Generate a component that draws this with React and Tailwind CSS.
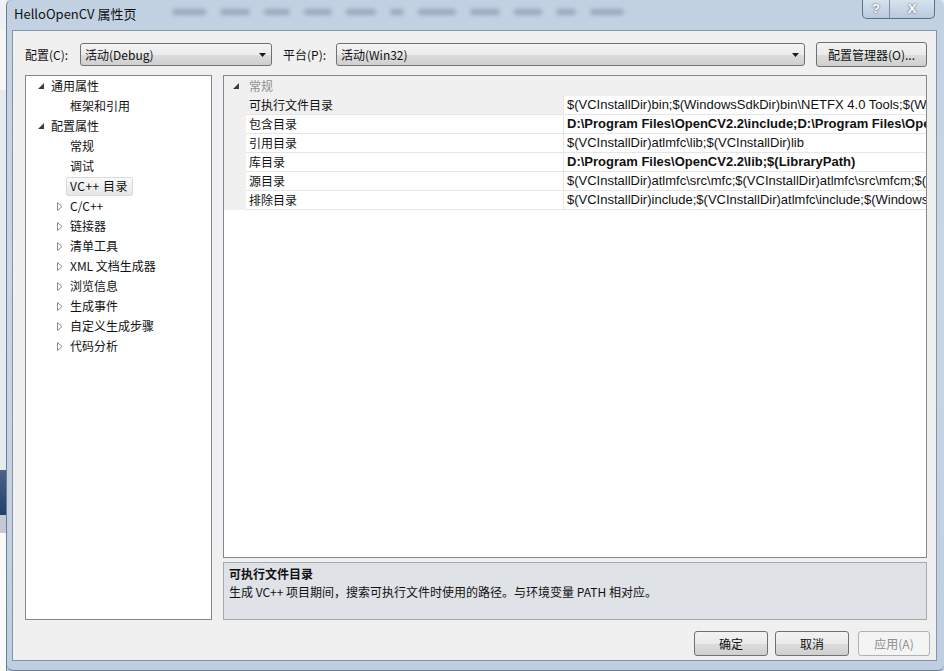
import React from "react";

const CJK = "font-['Noto_Sans_CJK_SC','Noto_Sans',sans-serif]";
const LAT = "font-['Liberation_Sans','Noto_Sans_CJK_SC',sans-serif]";

const tree = [
  { level: 1, label: "通用属性" },
  { level: 2, label: "框架和引用" },
  { level: 1, label: "配置属性" },
  { level: 2, label: "常规" },
  { level: 2, label: "调试" },
  { level: 2, label: "VC++ 目录", selected: true },
  { level: 2, label: "C/C++", arrow: true },
  { level: 2, label: "链接器", arrow: true },
  { level: 2, label: "清单工具", arrow: true },
  { level: 2, label: "XML 文档生成器", arrow: true },
  { level: 2, label: "浏览信息", arrow: true },
  { level: 2, label: "生成事件", arrow: true },
  { level: 2, label: "自定义生成步骤", arrow: true },
  { level: 2, label: "代码分析", arrow: true },
];

const props = [
  { name: "可执行文件目录", value: "$(VCInstallDir)bin;$(WindowsSdkDir)bin\\NETFX 4.0 Tools;$(WindowsSdkDir)bin;$(VSInstallDir)Common7\\Tools\\bin", selected: true },
  { name: "包含目录", value: "D:\\Program Files\\OpenCV2.2\\include;D:\\Program Files\\OpenCV2.2\\include\\opencv;$(IncludePath)", bold: true },
  { name: "引用目录", value: "$(VCInstallDir)atlmfc\\lib;$(VCInstallDir)lib" },
  { name: "库目录", value: "D:\\Program Files\\OpenCV2.2\\lib;$(LibraryPath)", bold: true },
  { name: "源目录", value: "$(VCInstallDir)atlmfc\\src\\mfc;$(VCInstallDir)atlmfc\\src\\mfcm;$(VCInstallDir)atlmfc\\src\\atl;$(VCInstallDir)crt\\src" },
  { name: "排除目录", value: "$(VCInstallDir)include;$(VCInstallDir)atlmfc\\include;$(WindowsSdkDir)include;$(FrameworkSDKDir)\\include" },
];

// blurred menu items of the window behind the glass title bar
const blobs = [34, 30, 26, 28, 30, 14, 38, 30, 28, 20, 34];

const Expanded = () => (
  <svg width="6" height="6" viewBox="0 0 6 6">
    <polygon points="6,0 6,6 0,6" fill="#3c3c3c" />
  </svg>
);

const Collapsed = () => (
  <svg width="6" height="9" viewBox="0 0 6 9">
    <polygon points="0.5,0.5 5,4.5 0.5,8.5" fill="none" stroke="#8a8a8a" strokeWidth="1" />
  </svg>
);

const DropArrow = () => (
  <svg width="7" height="4" viewBox="0 0 7 4">
    <polygon points="0,0 7,0 3.5,4" fill="#1a1a1a" />
  </svg>
);

const Combo = ({ text, width }) => (
  <div
    className={`${width} shrink-0 h-[23px] flex items-center justify-between pl-[4px] pr-[5px] rounded-[3px] border border-[#707070] bg-[linear-gradient(180deg,#f4f4f4_0%,#ebebeb_50%,#dddddd_51%,#cfcfcf_100%)]`}
  >
    <span className="text-[12px] text-[#111]">{text}</span>
    <DropArrow />
  </div>
);

const Button = ({ children, width, disabled }) => (
  <div
    className={`${width} shrink-0 h-[25px] flex items-center justify-center rounded-[3px] border text-[12px] ${
      disabled
        ? "border-[#adb2b5] bg-[#f4f4f4] text-[#8d8d8d]"
        : "border-[#707070] text-[#111] bg-[linear-gradient(180deg,#f2f2f2_0%,#ebebeb_50%,#dddddd_51%,#cfcfcf_100%)]"
    }`}
  >
    {children}
  </div>
);

export default function App() {
  return (
    <div className={`w-[944px] h-[671px] flex overflow-hidden bg-[#dfe5ec] ${CJK}`}>
      {/* window behind */}
      <div className="w-[6px] shrink-0 flex flex-col">
        <div className="h-[30px] bg-[#eef1f5]" />
        <div className="h-[60px] bg-[#f6f6f6]" />
        <div className="h-[380px] bg-[#e7ebf0]" />
        <div className="h-[45px] bg-[linear-gradient(180deg,#4a6485,#22406a)]" />
        <div className="h-[18px] bg-[#c3cad3]" />
        <div className="flex-1 bg-[#fafafa]" />
      </div>

      {/* dialog window */}
      <div className="flex-1 min-w-0 flex flex-col rounded-t-[6px] border-l border-[#6d7d90] bg-[linear-gradient(180deg,#c2d1e2_0%,#c9d6e5_40%,#bfcfe1_100%)]">
        {/* title bar */}
        <div className="h-[30px] shrink-0 flex items-start">
          <div className="pl-[7px] pt-[5px] text-[13px] leading-[18px] text-[#111]">HelloOpenCV 属性页</div>
          <div className="flex-1 flex items-center gap-[14px] pl-[36px] pt-[9px] opacity-60">
            {blobs.map((w, i) => (
              <div key={i} style={{ width: w }} className="h-[6px] rounded-full bg-[#7d8ca0] blur-[2px]" />
            ))}
          </div>
          <div className="mr-[9px] flex h-[19px] rounded-b-[5px] border border-t-0 border-[#5c6f86] overflow-hidden bg-[linear-gradient(180deg,#d7e2ee,#b9cadd)]">
            <div className={`w-[27px] flex items-center justify-center border-r border-[#7d8ea3] text-[13px] font-bold text-white [text-shadow:0_0_2px_#2b3a4d] ${LAT}`}>?</div>
            <div className={`w-[44px] flex items-center justify-center text-[13px] font-bold text-white [text-shadow:0_0_2px_#2b3a4d] ${LAT}`}>X</div>
          </div>
        </div>

        <div className="flex-1 min-h-0 flex">
          <div className="w-[5px] shrink-0" />
          {/* client area */}
          <div className="flex-1 min-w-0 flex flex-col border border-[#8595a8] bg-[#f0f0f0] text-[#111]">
            {/* config row */}
            <div className="h-[23px] mt-[12px] ml-[12px] mr-[10px] flex items-center">
              <span className="text-[12px] w-[55px] shrink-0">配置(C):</span>
              <Combo text="活动(Debug)" width="w-[192px]" />
              <span className="text-[12px] ml-[11px] w-[53px] shrink-0">平台(P):</span>
              <Combo text="活动(Win32)" width="w-[469px]" />
              <div className="ml-[11px]">
                <Button width="w-[111px]">配置管理器(O)...</Button>
              </div>
            </div>

            {/* main area */}
            <div className="mt-[9px] ml-[12px] mr-[9px] h-[545px] shrink-0 flex gap-[11px]">
              {/* tree */}
              <div className="w-[187px] shrink-0 h-full border border-[#828790] bg-white">
                {tree.map((t) => (
                  <div key={t.label} className="h-[20px] flex items-center text-[12px] leading-[20px]">
                    {t.level === 1 ? (
                      <>
                        <div className="ml-[12px] w-[6px] mr-[7px] flex items-center">
                          <Expanded />
                        </div>
                        <span>{t.label}</span>
                      </>
                    ) : t.arrow ? (
                      <>
                        <div className="ml-[31px] w-[6px] mr-[7px] flex items-center">
                          <Collapsed />
                        </div>
                        <span>{t.label}</span>
                      </>
                    ) : t.selected ? (
                      <span className="ml-[40px] h-[19px] pl-[3px] pr-[4px] flex items-center rounded-[2px] border border-[#d9d9d9] bg-[linear-gradient(180deg,#fafafa,#e6e6e6)] tracking-[0.5px]">
                        {t.label}
                      </span>
                    ) : (
                      <span className="ml-[44px]">{t.label}</span>
                    )}
                  </div>
                ))}
              </div>

              {/* right side */}
              <div className="flex-1 min-w-0 flex flex-col">
                {/* property grid */}
                <div className="h-[483px] shrink-0 border border-[#828790] bg-white flex flex-col">
                  <div className="h-[20px] flex items-center bg-[#f0f0f0]">
                    <div className="w-[22px] flex justify-center pl-[2px]">
                      <Expanded />
                    </div>
                    <span className="ml-[3px] text-[12px] text-[#8e8e8e]">常规</span>
                  </div>
                  {props.map((p) => (
                    <div key={p.name} className="h-[19px] flex">
                      <div className="w-[22px] shrink-0 bg-[#f0f0f0]" />
                      <div
                        className={`w-[318px] shrink-0 flex items-center pl-[3px] border-b border-r border-[#e6e6e6] text-[12px] ${
                          p.selected ? "bg-[#f0f0f0]" : "bg-white"
                        }`}
                      >
                        {p.name}
                      </div>
                      <div
                        className={`flex-1 min-w-0 flex items-center pl-[3px] border-b border-[#e6e6e6] overflow-hidden whitespace-nowrap text-[13px] ${LAT} ${
                          p.bold ? "font-bold" : ""
                        }`}
                      >
                        {p.value}
                      </div>
                    </div>
                  ))}
                </div>

                {/* description */}
                <div className="h-[4px] shrink-0" />
                <div className="flex-1 border border-[#a5a9ae] bg-[#dfe2e7] pl-[5px] pt-[2px]">
                  <div className="text-[12px] font-bold leading-[18px]">可执行文件目录</div>
                  <div className="text-[12px] leading-[18px]">生成 VC++ 项目期间，搜索可执行文件时使用的路径。与环境变量 PATH 相对应。</div>
                </div>
              </div>
            </div>

            {/* buttons */}
            <div className="mt-[11px] mr-[6px] flex justify-end">
              <Button width="w-[74px]">确定</Button>
              <div className="w-[7px]" />
              <Button width="w-[74px]">取消</Button>
              <div className="w-[9px]" />
              <Button width="w-[72px]" disabled>
                应用(A)
              </Button>
            </div>
          </div>
          <div className="w-[7px] shrink-0" />
        </div>
        <div className="h-[10px] shrink-0 rounded-b-[6px] border-b border-[#6d7d90]" />
      </div>
    </div>
  );
}
